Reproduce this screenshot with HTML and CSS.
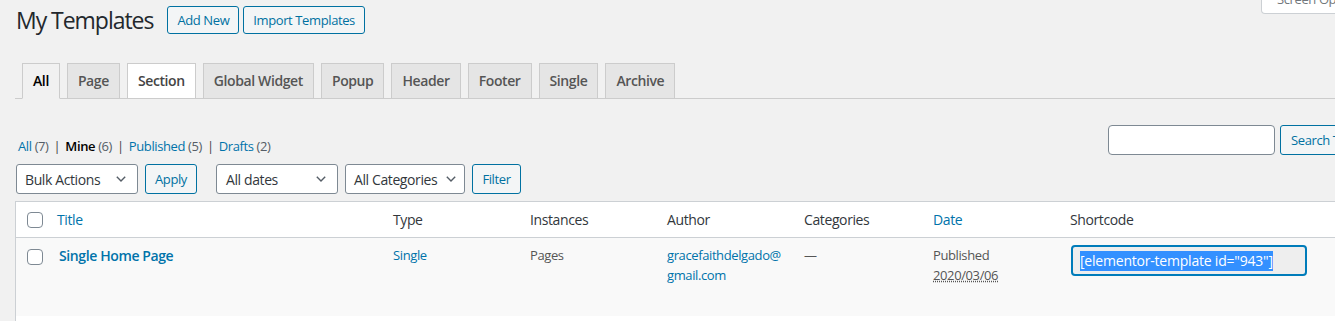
FILE: index.html
```html
<!DOCTYPE html>
<html lang="en">
<head>
<meta charset="utf-8">
<title>My Templates</title>
<link rel="stylesheet" href="styles.css">
</head>
<body>
<div class="wrap">
  <button class="screen-meta" type="button">Screen Options
    <svg class="sm-arrow" width="10" height="6" viewBox="0 0 10 6"><path d="M1 1l4 4 4-4" fill="none" stroke="#72777c" stroke-width="1.5"/></svg>
  </button>

  <div class="head">
    <h1 class="page-title">My Templates</h1>
    <a class="btn title-action" href="#">Add New</a>
    <a class="btn title-action" href="#">Import Templates</a>
  </div>

  <nav class="tabs">
    <a class="tab tab-active" href="#">All</a>
    <a class="tab" href="#">Page</a>
    <a class="tab tab-hover" href="#">Section</a>
    <a class="tab" href="#">Global Widget</a>
    <a class="tab" href="#">Popup</a>
    <a class="tab" href="#">Header</a>
    <a class="tab" href="#">Footer</a>
    <a class="tab" href="#">Single</a>
    <a class="tab" href="#">Archive</a>
  </nav>

  <div class="filters">
    <ul class="subsubsub">
      <li><a href="#">All</a> <span class="count">(7)</span></li>
      <li class="sep">|</li>
      <li><a class="current" href="#">Mine</a> <span class="count">(6)</span></li>
      <li class="sep">|</li>
      <li><a href="#">Published</a> <span class="count">(5)</span></li>
      <li class="sep">|</li>
      <li><a href="#">Drafts</a> <span class="count">(2)</span></li>
    </ul>
    <div class="search-box">
      <input class="search-input" type="search" aria-label="Search Templates">
      <button class="btn search-btn" type="button">Search Templates</button>
    </div>
  </div>

  <div class="tablenav">
    <div class="select sel-bulk"><span>Bulk Actions</span><svg class="chev" width="10" height="6" viewBox="0 0 10 6"><path d="M0.8 0.8l4.2 4.2 4.2-4.2" fill="none" stroke="#555d66" stroke-width="1.4"/></svg></div>
    <button class="btn" type="button">Apply</button>
    <div class="select sel-dates"><span>All dates</span><svg class="chev" width="10" height="6" viewBox="0 0 10 6"><path d="M0.8 0.8l4.2 4.2 4.2-4.2" fill="none" stroke="#555d66" stroke-width="1.4"/></svg></div>
    <div class="select sel-cats"><span>All Categories</span><svg class="chev" width="10" height="6" viewBox="0 0 10 6"><path d="M0.8 0.8l4.2 4.2 4.2-4.2" fill="none" stroke="#555d66" stroke-width="1.4"/></svg></div>
    <button class="btn btn-filter" type="button">Filter</button>
  </div>

  <table class="list">
    <colgroup>
      <col class="c-cb"><col class="c-title"><col class="c-type"><col class="c-inst"><col class="c-author"><col class="c-cats"><col class="c-date"><col>
    </colgroup>
    <thead>
      <tr>
        <th class="cb"><span class="check"></span></th>
        <th><a href="#">Title</a></th>
        <th>Type</th>
        <th>Instances</th>
        <th>Author</th>
        <th>Categories</th>
        <th><a href="#">Date</a></th>
        <th>Shortcode</th>
      </tr>
    </thead>
    <tbody>
      <tr class="alt">
        <td class="cb"><span class="check"></span></td>
        <td class="title-cell"><a class="row-title" href="#">Single Home Page</a></td>
        <td><a href="#">Single</a></td>
        <td>Pages</td>
        <td><a href="#">gracefaithdelgado@<wbr>gmail.com</a></td>
        <td>—</td>
        <td>Published<br><abbr title="2020/03/06">2020/03/06</abbr></td>
        <td><div class="shortcode"><span class="sel">[elementor-template id="943"]</span></div></td>
      </tr>
      <tr class="empty"><td colspan="8"></td></tr>
    </tbody>
  </table>
</div>
</body>
</html>
```
FILE: styles.css
```css
html, body {
  margin: 0;
  padding: 0;
  overflow: hidden;
}
body {
  background: #f1f1f1;
  color: #444;
  font-family: "Open Sans", "Noto Sans", sans-serif;
  font-size: 13px;
  letter-spacing: -0.03em;
  width: 1335px;
  height: 321px;
}
a { color: #0073aa; text-decoration: none; }
button, input { letter-spacing: inherit; }

.wrap {
  position: relative;
  margin-left: 15px;
  width: 1381px;
}

.screen-meta {
  position: absolute;
  top: -14px;
  left: 1246px;
  height: 28px;
  padding: 0 20px 0 15px;
  background: #fff;
  border: 1px solid #ccd0d4;
  border-top: none;
  border-radius: 0 0 4px 4px;
  color: #72777c;
  font: 13px/27px "Open Sans", sans-serif;
  letter-spacing: -0.03em;
  white-space: nowrap;
  display: flex;
  align-items: center;
  gap: 6px;
}

.head {
  display: flex;
  align-items: center;
  padding-top: 6px;
  height: 28px;
}
.page-title {
  margin: 0 14px 0 1px;
  font-size: 23px;
  font-weight: 400;
  line-height: 28px;
  letter-spacing: -0.045em;
  color: #23282d;
}

.btn {
  box-sizing: border-box;
  display: inline-flex;
  align-items: center;
  height: 28px;
  padding: 0 9px;
  border: 1px solid #0071a1;
  border-radius: 3px;
  background: #f3f5f6;
  color: #0071a1;
  font: 13px "Open Sans", sans-serif;
  letter-spacing: -0.03em;
}
.title-action { margin-right: 4px; }

.tabs {
  display: flex;
  margin-top: 29px;
  border-bottom: 1px solid #ccc;
  padding-left: 7px;
  gap: 7px;
}
.tab {
  display: block;
  border: 1px solid #ccc;
  border-bottom: none;
  padding: 5px 10px;
  font-size: 14px;
  line-height: 24px;
  font-weight: 600;
  background: #e5e5e5;
  color: #555;
}
.tab-active {
  background: #f1f1f1;
  color: #000;
  margin-bottom: -1px;
  border-bottom: 1px solid #f1f1f1;
}
.tab-hover { background: #fff; color: #444; }

.filters {
  display: flex;
  justify-content: space-between;
  align-items: flex-start;
  margin-top: 26px;
}
.subsubsub {
  display: flex;
  gap: 5px;
  list-style: none;
  margin: 8px 0 0 3px;
  padding: 0;
  line-height: 26px;
  color: #666;
}
.subsubsub .count { color: #555d66; }
.subsubsub .sep { color: #444; }
.subsubsub .current { color: #000; font-weight: 600; }

.search-box { display: flex; gap: 5px; }
.search-input {
  box-sizing: border-box;
  width: 167px;
  height: 30px;
  border: 1px solid #7e8993;
  border-radius: 4px;
  background: #fff;
  margin: 0;
}
.search-btn { width: 116px; height: 30px; padding: 0 10px; white-space: nowrap; overflow: hidden; }

.tablenav {
  display: flex;
  align-items: center;
  gap: 7px;
  margin: 5px 0 7px 1px;
  height: 30px;
}
.tablenav .btn { height: 30px; padding: 0 9px; }
.tablenav .btn-filter { width: 49px; justify-content: center; padding: 0; }
.select {
  box-sizing: border-box;
  height: 30px;
  display: flex;
  align-items: center;
  justify-content: space-between;
  padding: 0 11px 0 8px;
  border: 1px solid #7e8993;
  border-radius: 3px;
  background: #fff;
  color: #32373c;
  font-size: 14px;
}
.sel-bulk { width: 122px; }
.sel-dates { width: 122px; margin-left: 12px; padding-left: 9px; }
.sel-cats { width: 120px; padding-right: 8px; }

.list {
  width: 1381px;
  border: 1px solid #ccd0d4;
  border-spacing: 0;
  background: #fff;
  table-layout: fixed;
}
.c-cb { width: 31px; }
.c-title { width: 336px; }
.c-type, .c-inst, .c-author, .c-date { width: 137px; }
.c-cats { width: 129px; }

.list th, .list td {
  box-sizing: border-box;
  text-align: left;
  vertical-align: top;
  padding: 8px 10px;
}
.list th {
  height: 36px;
  font-weight: 400;
  font-size: 14px;
  line-height: 19px;
  color: #32373c;
  border-bottom: 1px solid #ccd0d4;
}
.list td {
  font-size: 13px;
  line-height: 19.5px;
  color: #555;
}
.list td.title-cell { padding-left: 12px; }
.list .cb { padding: 10px 0 0 11px; }
.list td.cb { padding-top: 11px; }
.check {
  display: block;
  box-sizing: border-box;
  width: 16px;
  height: 16px;
  border: 1px solid #7e8993;
  border-radius: 4px;
  background: #fff;
}
.alt td { background: #f9f9f9; height: 78px; }
.row-title { font-size: 14px; font-weight: 600; line-height: 20px; }
abbr { text-decoration: underline dotted; }
.shortcode {
  box-sizing: border-box;
  width: 236px;
  height: 31px;
  margin: -1px 0 0 1px;
  padding: 0 7px;
  border: 2px solid #007cba;
  border-radius: 4px;
  background: #eee;
  display: flex;
  align-items: center;
  font-size: 14px;
  letter-spacing: -0.015em;
}
.sel { background: #3390ff; color: #fff; line-height: 20px; white-space: nowrap; }
.empty td { height: 20px; padding: 0; }
```
